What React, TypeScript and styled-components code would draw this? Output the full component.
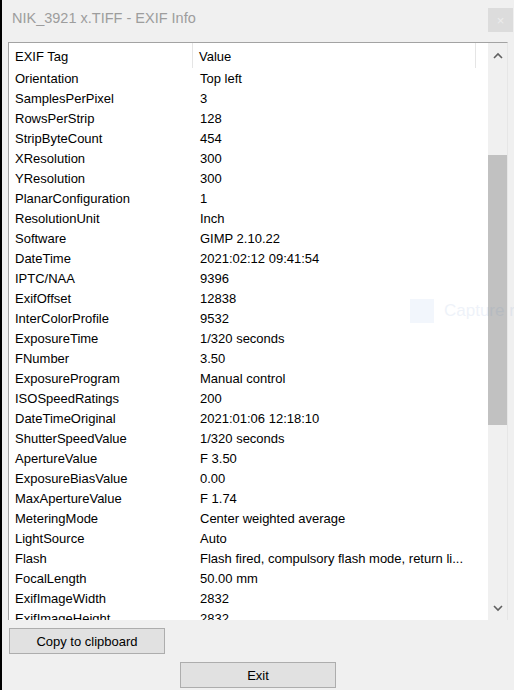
import React from "react";
import styled, { createGlobalStyle } from "styled-components";

const GlobalStyle = createGlobalStyle`
  html, body { margin: 0; padding: 0; background: #f0f0f0; }
  * { box-sizing: border-box; }
`;

const FONT = `"Liberation Sans", Arial, sans-serif`;

const Window = styled.div`
  width: 514px;
  height: 690px;
  background: #f0f0f0;
  border-left: 2px solid #000;
  font-family: ${FONT};
  font-size: 13px;
  color: #000;
  display: flex;
  flex-direction: column;
  position: relative;
  overflow: hidden;
`;

const TitleBar = styled.div`
  height: 42px;
  display: flex;
  align-items: flex-start;
  justify-content: space-between;
  padding: 0 1px 0 10px;
`;

const Title = styled.div`
  margin-top: 10px;
  font-size: 14.5px;
  color: #9d9d9d;
`;

const CloseBox = styled.div`
  margin-top: 8px;
  width: 25px;
  height: 24px;
  background: #dcdcdc;
  color: #ececec;
  font-size: 13px;
  display: flex;
  align-items: center;
  justify-content: center;
`;

const ListBox = styled.div`
  margin-left: 6px;
  width: 500px;
  height: 578px;
  border-top: 1px solid #a3a3a3;
  border-left: 1px solid #a3a3a3;
  border-right: 1px solid #e6e6e6;
  background: #fff;
  display: flex;
`;

const Content = styled.div`
  flex: 1;
  overflow: hidden;
`;

const HeaderRow = styled.div`
  height: 25px;
  display: grid;
  grid-template-columns: 184px 283px 1fr;
  align-items: stretch;
`;

const HeaderCell = styled.div`
  display: flex;
  align-items: center;
  padding-left: 6px;
  padding-top: 1px;
  border-right: 1px solid #e5e5e5;
`;

const HeaderFill = styled.div``;

const Row = styled.div`
  height: 20px;
  display: grid;
  grid-template-columns: 184px 283px;
  align-items: start;
  white-space: nowrap;
`;

const Cell = styled.div<{ $first?: boolean }>`
  padding-left: ${(p) => (p.$first ? "6px" : "7px")};
  padding-top: 2px;
  overflow: hidden;
  line-height: 18px;
`;

const ScrollBar = styled.div`
  width: 19px;
  background: #f0f0f0;
  display: flex;
  flex-direction: column;
`;

const ArrowBox = styled.div`
  height: 24px;
  display: flex;
  align-items: center;
  justify-content: center;
`;

const Track = styled.div`
  flex: 1;
  display: flex;
  flex-direction: column;
`;

const Thumb = styled.div`
  margin-top: 88px;
  height: 270px;
  background: #c1c1c1;
`;

const Footer = styled.div`
  display: flex;
  flex-direction: column;
  padding-top: 8px;
  gap: 8px;
`;

const Button = styled.button<{ $center?: boolean }>`
  width: 156px;
  height: 26px;
  background: #e1e1e1;
  border: 1px solid #adadad;
  font-family: ${FONT};
  font-size: 13px;
  color: #000;
  padding: 1px 0 0 0;
  margin-left: ${(p) => (p.$center ? "0" : "7px")};
  align-self: ${(p) => (p.$center ? "center" : "flex-start")};
`;

const Ghost = styled.div`
  position: absolute;
  left: 408px;
  top: 299px;
  display: flex;
  align-items: center;
  gap: 10px;
  opacity: 0.09;
  color: #4a78c0;
  font-size: 17px;
  white-space: nowrap;
`;

const GhostIcon = styled.div`
  width: 24px;
  height: 24px;
  background: #7aa7e0;
`;

const rows: [string, string][] = [
  ["Orientation", "Top left"],
  ["SamplesPerPixel", "3"],
  ["RowsPerStrip", "128"],
  ["StripByteCount", "454"],
  ["XResolution", "300"],
  ["YResolution", "300"],
  ["PlanarConfiguration", "1"],
  ["ResolutionUnit", "Inch"],
  ["Software", "GIMP 2.10.22"],
  ["DateTime", "2021:02:12 09:41:54"],
  ["IPTC/NAA", "9396"],
  ["ExifOffset", "12838"],
  ["InterColorProfile", "9532"],
  ["ExposureTime", "1/320 seconds"],
  ["FNumber", "3.50"],
  ["ExposureProgram", "Manual control"],
  ["ISOSpeedRatings", "200"],
  ["DateTimeOriginal", "2021:01:06 12:18:10"],
  ["ShutterSpeedValue", "1/320 seconds"],
  ["ApertureValue", "F 3.50"],
  ["ExposureBiasValue", "0.00"],
  ["MaxApertureValue", "F 1.74"],
  ["MeteringMode", "Center weighted average"],
  ["LightSource", "Auto"],
  ["Flash", "Flash fired, compulsory flash mode, return li..."],
  ["FocalLength", "50.00 mm"],
  ["ExifImageWidth", "2832"],
  ["ExifImageHeight", "2832"],
];

const Chevron = ({ up }: { up?: boolean }) => (
  <svg width="10" height="7" viewBox="0 0 10 7">
    <path
      d={up ? "M1 6 L5 2 L9 6" : "M1 1 L5 5 L9 1"}
      fill="none"
      stroke="#606060"
      strokeWidth="1.6"
    />
  </svg>
);

export default function App() {
  return (
    <>
      <GlobalStyle />
      <Window>
        <TitleBar>
          <Title>NIK_3921 x.TIFF - EXIF Info</Title>
          <CloseBox>×</CloseBox>
        </TitleBar>
        <ListBox>
          <Content>
            <HeaderRow>
              <HeaderCell>EXIF Tag</HeaderCell>
              <HeaderCell>Value</HeaderCell>
              <HeaderFill />
            </HeaderRow>
            {rows.map(([k, v]) => (
              <Row key={k}>
                <Cell $first>{k}</Cell>
                <Cell>{v}</Cell>
              </Row>
            ))}
          </Content>
          <ScrollBar>
            <ArrowBox>
              <Chevron up />
            </ArrowBox>
            <Track>
              <Thumb />
            </Track>
            <ArrowBox>
              <Chevron />
            </ArrowBox>
          </ScrollBar>
        </ListBox>
        <Footer>
          <Button>Copy to clipboard</Button>
          <Button $center>Exit</Button>
        </Footer>
        <Ghost>
          <GhostIcon />
          Capture re
        </Ghost>
      </Window>
    </>
  );
}
